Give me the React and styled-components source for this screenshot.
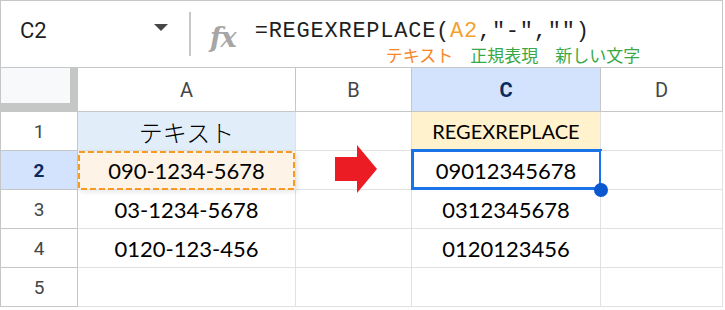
import React from 'react'
import styled, { createGlobalStyle } from 'styled-components'

const GlobalStyle = createGlobalStyle`
  html, body {
    margin: 0;
    padding: 0;
    background: #ffffff;
  }
  body {
    font-family: Roboto, "Noto Sans CJK JP", sans-serif;
  }
`

const columns = [
  { key: 'A', width: 218 },
  { key: 'B', width: 116 },
  { key: 'C', width: 189, active: true },
  { key: 'D', width: 122 },
]

const rows = [
  { n: 1, a: 'テキスト', c: 'REGEXREPLACE' },
  { n: 2, a: '090-1234-5678', c: '09012345678', active: true },
  { n: 3, a: '03-1234-5678', c: '0312345678' },
  { n: 4, a: '0120-123-456', c: '0120123456' },
  { n: 5, a: '', c: '' },
]

const App = () => {
  return (
    <>
      <GlobalStyle />
      <Frame>
        <FormulaBar>
          <NameBox>
            <NameText>C2</NameText>
            <Caret />
          </NameBox>
          <Divider />
          <FxIcon>fx</FxIcon>
          <FormulaColumn>
            <FormulaText>
              =REGEXREPLACE(<Ref>A2</Ref>,"-","")
            </FormulaText>
            <Notes>
              <Note $color="#f7862a">テキスト</Note>
              <Note $color="#3aa844">正規表現</Note>
              <Note $color="#3aa844">新しい文字</Note>
            </Notes>
          </FormulaColumn>
        </FormulaBar>

        <Grid>
          <Corner />
          {columns.map(col => (
            <ColHeader key={col.key} $active={col.active}>{col.key}</ColHeader>
          ))}

          {rows.map(row => (
            <React.Fragment key={row.n}>
              <RowHeader $active={row.active}>{row.n}</RowHeader>
              {row.n === 1 ? (
                <Cell $bg="#e1eef9" $jp>{row.a}</Cell>
              ) : row.n === 2 ? (
                <CopiedCell>
                  {row.a}
                  <DashFrame viewBox="0 0 217 39" preserveAspectRatio="none">
                    <rect x="1" y="1" width="215" height="37" fill="none"
                      stroke="#f59a23" strokeWidth="2" strokeDasharray="6 3" />
                  </DashFrame>
                </CopiedCell>
              ) : (
                <Cell>{row.a}</Cell>
              )}
              <Cell>
                {row.n === 2 && (
                  <Arrow width="43" height="49" viewBox="0 0 43 49">
                    <path d="M0 12 H22 V0 L42 24 L22 48 V36 H0 Z" fill="#ec1c24" />
                  </Arrow>
                )}
              </Cell>
              {row.n === 1 ? (
                <Cell $bg="#fff2cc" $small>{row.c}</Cell>
              ) : row.n === 2 ? (
                <Cell>
                  {row.c}
                  <Selection />
                  <Handle />
                </Cell>
              ) : (
                <Cell>{row.c}</Cell>
              )}
              <Cell />
            </React.Fragment>
          ))}
        </Grid>
      </Frame>
    </>
  )
}

export default App

const Frame = styled.div`
  width: 723px;
  box-sizing: border-box;
  border-top: 1px solid #c4c7c5;
  border-left: 1px solid #c4c7c5;
`

const FormulaBar = styled.div`
  height: 67px;
  box-sizing: border-box;
  border-bottom: 1px solid #c4c7c5;
  border-right: 1px solid #c4c7c5;
  display: flex;
  align-items: center;
`

const NameBox = styled.div`
  width: 188px;
  padding-left: 19px;
  box-sizing: border-box;
  display: flex;
  align-items: center;
  justify-content: space-between;
  padding-right: 21px;
`

const NameText = styled.span`
  font-family: Roboto, sans-serif;
  font-size: 22px;
  color: #1f1f1f;
  margin-top: -7px;
`

const Caret = styled.span`
  width: 0;
  height: 0;
  border-left: 7px solid transparent;
  border-right: 7px solid transparent;
  border-top: 7px solid #444746;
  margin-top: -14px;
`

const Divider = styled.div`
  width: 2px;
  height: 44px;
  background: #c7c7c7;
`

const FxIcon = styled.span`
  font-family: "DejaVu Serif", serif;
  font-style: italic;
  font-weight: bold;
  font-size: 27px;
  color: #a6a6a6;
  margin-left: 19px;
  margin-top: 6px;
  letter-spacing: -1px;
`

const FormulaColumn = styled.div`
  margin-left: 19px;
  display: flex;
  flex-direction: column;
  align-self: stretch;
  padding-top: 18px;
`

const FormulaText = styled.div`
  font-family: "Liberation Mono", monospace;
  font-size: 22px;
  letter-spacing: 0.75px;
  color: #1f1f1f;
  line-height: 26px;
  white-space: nowrap;
`

const Ref = styled.span`
  color: #f4a12e;
`

const Notes = styled.div`
  display: flex;
  gap: 17px;
  padding-left: 131px;
  margin-top: -1px;
`

const Note = styled.span`
  font-family: "Noto Sans CJK JP", sans-serif;
  font-size: 17px;
  line-height: 22px;
  color: ${p => p.$color};
`

const Grid = styled.div`
  display: grid;
  grid-template-columns: 77px ${columns.map(c => c.width + 'px').join(' ')};
  grid-template-rows: 44px repeat(5, 39px);
`

const Corner = styled.div`
  box-sizing: border-box;
  background: #f8f9fa;
  border-right: 8px solid #c4c7c5;
  border-bottom: 9px solid #c4c7c5;
`

const ColHeader = styled.div`
  box-sizing: border-box;
  border-right: 1px solid #c4c7c5;
  border-bottom: 1px solid #c4c7c5;
  background: ${p => (p.$active ? '#d3e3fd' : '#ffffff')};
  color: ${p => (p.$active ? '#0b2a5c' : '#444746')};
  font-weight: ${p => (p.$active ? 700 : 400)};
  font-family: Roboto, sans-serif;
  font-size: 20px;
  display: flex;
  align-items: center;
  justify-content: center;
`

const RowHeader = styled.div`
  box-sizing: border-box;
  border-right: 1px solid #c4c7c5;
  border-bottom: 1px solid #c4c7c5;
  background: ${p => (p.$active ? '#d3e3fd' : '#ffffff')};
  color: ${p => (p.$active ? '#0b2a5c' : '#444746')};
  font-weight: ${p => (p.$active ? 700 : 400)};
  font-family: Roboto, sans-serif;
  font-size: 19px;
  display: flex;
  align-items: center;
  justify-content: center;
`

const Cell = styled.div`
  position: relative;
  box-sizing: border-box;
  border-right: 1px solid #e1e1e1;
  border-bottom: 1px solid #e1e1e1;
  background: ${p => p.$bg || '#ffffff'};
  font-family: ${p => (p.$jp ? '"Noto Sans CJK JP", sans-serif' : 'Lato, sans-serif')};
  font-weight: ${p => (p.$jp ? 300 : 400)};
  font-size: ${p => (p.$jp ? '24px' : p.$small ? '20px' : '22px')};
  color: #000000;
  display: flex;
  align-items: center;
  justify-content: center;
`

const CopiedCell = styled(Cell)`
  background: #fdf3e6;
  z-index: 1;
  box-shadow: 2px 2px 5px rgba(0, 0, 0, 0.09);
`

const DashFrame = styled.svg`
  position: absolute;
  left: 0;
  top: 0;
  width: 217px;
  height: 39px;
`

const Arrow = styled.svg`
  position: absolute;
  left: 39px;
  top: -6px;
  z-index: 2;
`

const Selection = styled.div`
  position: absolute;
  left: -1px;
  top: -2px;
  right: -2px;
  bottom: -1px;
  border: 3px solid #1a73e8;
  pointer-events: none;
`

const Handle = styled.div`
  position: absolute;
  right: -8px;
  bottom: -8px;
  width: 14px;
  height: 14px;
  border-radius: 50%;
  background: #0b57d0;
  z-index: 3;
`
